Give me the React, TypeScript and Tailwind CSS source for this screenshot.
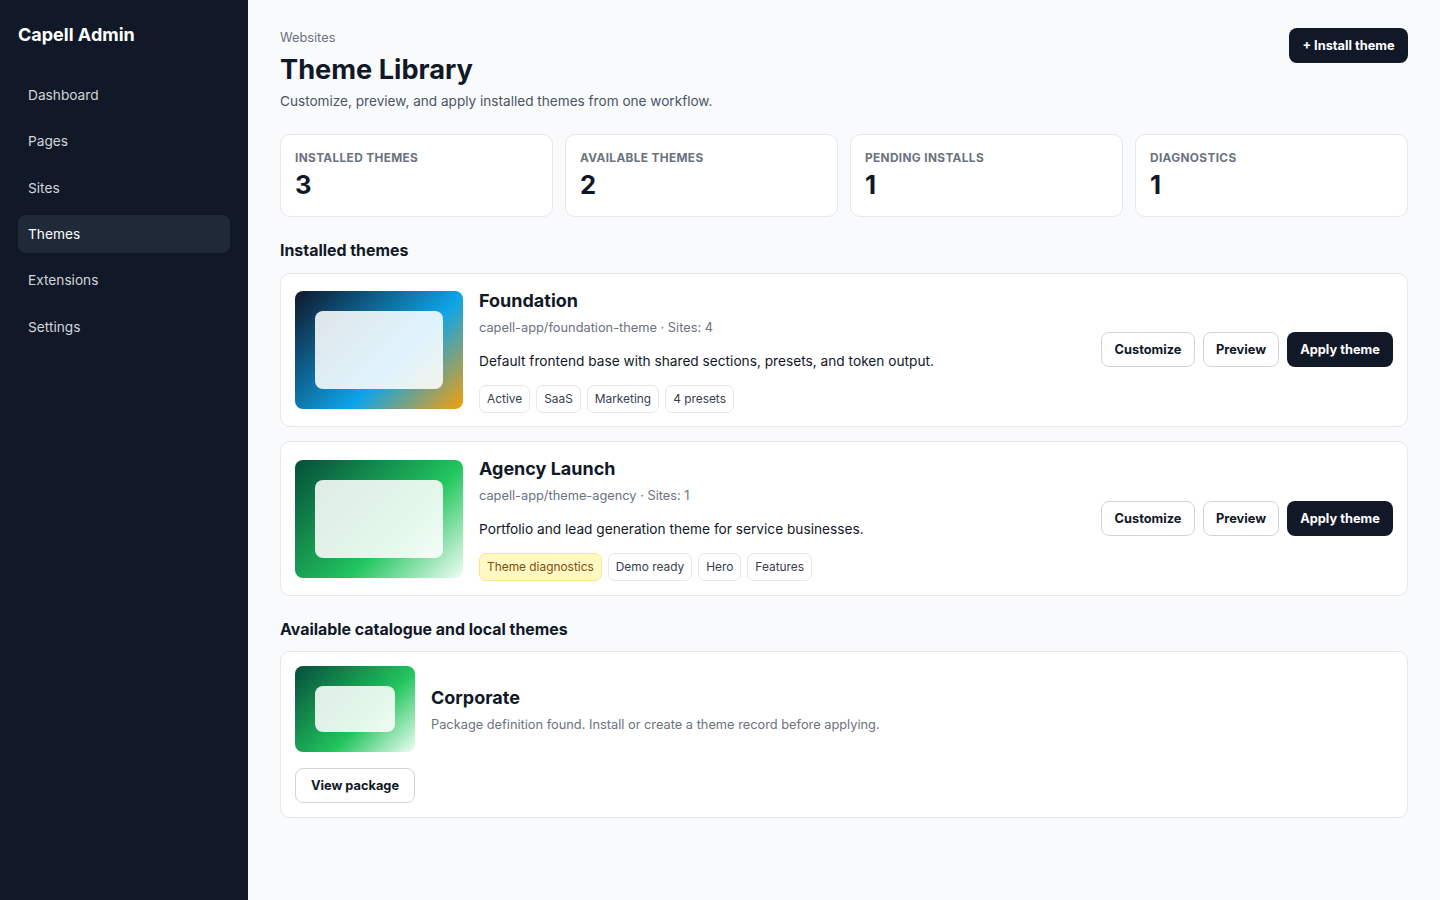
const navItems = ['Dashboard', 'Pages', 'Sites', 'Themes', 'Extensions', 'Settings'];
const stats: [string, string][] = [
  ['INSTALLED THEMES', '3'],
  ['AVAILABLE THEMES', '2'],
  ['PENDING INSTALLS', '1'],
  ['DIAGNOSTICS', '1'],
];

function Tag({ label, warn }: { label: string; warn?: boolean }) {
  return (
    <span
      className={
        warn
          ? 'h-[28px] flex items-center px-[7px] rounded-[7px] border border-[#fde68a] bg-[#fef9c3] text-[11.9px] text-[#854d0e]'
          : 'h-[28px] flex items-center px-[7px] rounded-[7px] border border-[#e5e7eb] bg-white text-[11.9px] text-[#374151]'
      }
    >
      {label}
    </span>
  );
}

function OutlineButton({ label, className }: { label: string; className?: string }) {
  return (
    <button className={'h-[35px] flex items-center justify-center rounded-[8px] border border-[#d1d5db] bg-white text-[12.8px] font-bold text-[#111827] ' + (className ?? '')}>
      {label}
    </button>
  );
}

function ThemeRow({ title, meta, desc, tags, blue }: { title: string; meta: string; desc: string; tags: { label: string; warn?: boolean }[]; blue?: boolean }) {
  return (
    <div className="flex items-center gap-4 bg-white border border-[#e5e7eb] rounded-[10px] p-[14px]">
      <div
        className={
          (blue
            ? 'bg-[linear-gradient(135deg,#0f172a,#0ea5e9_60%,#f59e0b)]'
            : 'bg-[linear-gradient(135deg,#064e3b,#22c55e_60%,#f0fdf4)]') +
          ' w-[168px] h-[118px] shrink-0 rounded-[8px] p-5 flex'
        }
      >
        <div className="flex-1 rounded-[8px] bg-white/[.87]" />
      </div>
      <div className="flex-1 min-w-0 h-[124.4px]">
        <h3 className="text-[18px] leading-[26px] font-bold text-[#111827]">{title}</h3>
        <div className="mt-[4px] text-[12.8px] leading-[20px] text-[#6b7280]">{meta}</div>
        <p className="mt-[13px] text-[13.7px] leading-[21px] text-[#111827]">{desc}</p>
        <div className="mt-[13px] flex gap-[6px]">
          {tags.map((t) => (
            <Tag key={t.label} label={t.label} warn={t.warn} />
          ))}
        </div>
      </div>
      <div className="flex items-center gap-2">
        <OutlineButton label="Customize" className="w-[94px]" />
        <OutlineButton label="Preview" className="w-[76px]" />
        <button className="h-[35px] w-[106px] rounded-[8px] bg-[#111827] text-[12.8px] font-bold text-white">Apply theme</button>
      </div>
    </div>
  );
}

export default function App() {
  return (
    <div className="flex min-h-[900px] bg-[#f8fafc] font-['Inter',sans-serif]">
      <aside className="w-[248px] shrink-0 bg-[#111827] px-[18px] pt-[22px]">
        <div className="text-[18px] leading-[26px] font-bold text-white">Capell Admin</div>
        <nav className="mt-[27.8px] flex flex-col gap-[8px]">
          {navItems.map((n) => (
            <div
              key={n}
              className={
                n === 'Themes'
                  ? 'h-[38.4px] flex items-center px-[10px] rounded-[8px] bg-[#1f2937] text-[13.7px] text-white'
                  : 'h-[38.4px] flex items-center px-[10px] rounded-[8px] text-[13.7px] text-[#d1d5db]'
              }
            >
              {n}
            </div>
          ))}
        </nav>
      </aside>
      <main className="flex-1 min-w-0 px-[32px] pt-[28px]">
        <header className="flex items-start justify-between">
          <div>
            <div className="text-[12.8px] leading-[20px] text-[#6b7280]">Websites</div>
            <h1 className="mt-[3px] text-[27.2px] leading-[38px] font-bold text-[#111827]">Theme Library</h1>
            <p className="text-[13.6px] leading-[24px] text-[#4b5563]">Customize, preview, and apply installed themes from one workflow.</p>
          </div>
          <button className="h-[35px] w-[119px] rounded-[8px] bg-[#111827] text-[12.8px] font-bold text-white">+ Install theme</button>
        </header>
        <section className="mt-[21px] grid grid-cols-4 gap-3">
          {stats.map(([label, value]) => (
            <div key={label} className="h-[83px] bg-white border border-[#e5e7eb] rounded-[10px] px-[14px] pt-[14px]">
              <div className="text-[11.84px] leading-[18px] font-bold tracking-[0.03em] text-[#6b7280]">{label}</div>
              <div className="mt-[1px] text-[25.6px] leading-[34px] font-bold text-[#111827]">{value}</div>
            </div>
          ))}
        </section>
        <h2 className="mt-[21px] text-[15.9px] leading-[26px] font-bold text-[#111827]">Installed themes</h2>
        <div className="mt-[8.7px] flex flex-col gap-[14.3px]">
          <ThemeRow
            blue
            title="Foundation"
            meta="capell-app/foundation-theme · Sites: 4"
            desc="Default frontend base with shared sections, presets, and token output."
            tags={[{ label: 'Active' }, { label: 'SaaS' }, { label: 'Marketing' }, { label: '4 presets' }]}
          />
          <ThemeRow
            title="Agency Launch"
            meta="capell-app/theme-agency · Sites: 1"
            desc="Portfolio and lead generation theme for service businesses."
            tags={[{ label: 'Theme diagnostics', warn: true }, { label: 'Demo ready' }, { label: 'Hero' }, { label: 'Features' }]}
          />
        </div>
        <h2 className="mt-[21px] text-[15.9px] leading-[26px] font-bold text-[#111827]">Available catalogue and local themes</h2>
        <div className="mt-[8.5px] flex flex-col gap-4 bg-white border border-[#e5e7eb] rounded-[10px] p-[14px]">
          <div className="flex items-center gap-4">
            <div className="w-[120px] h-[86px] shrink-0 rounded-[8px] p-5 flex bg-[linear-gradient(135deg,#064e3b,#22c55e_60%,#f0fdf4)]">
              <div className="flex-1 rounded-[8px] bg-white/[.87]" />
            </div>
            <div className="pt-[1px]">
              <h3 className="text-[18px] leading-[26px] font-bold text-[#111827]">Corporate</h3>
              <p className="mt-[4px] text-[12.8px] leading-[20px] text-[#6b7280]">Package definition found. Install or create a theme record before applying.</p>
            </div>
          </div>
          <OutlineButton label="View package" className="w-[120px]" />
        </div>
      </main>
    </div>
  );
}
